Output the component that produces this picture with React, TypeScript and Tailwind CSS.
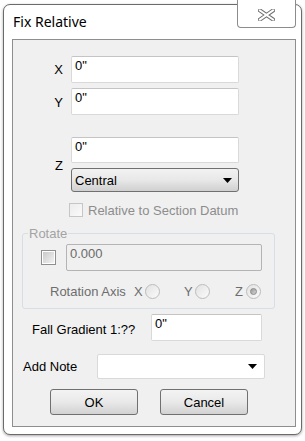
type TextBoxProps = {
  value?: string;
  className?: string;
};

function TextBox({ value, className = '' }: TextBoxProps) {
  return (
    <div className={`rounded-[2px] border border-[#d9d9d9] border-t-[#c4c4c4] bg-white px-[3px] pt-[1px] leading-[15px] text-black ${className}`}>
      {value}
    </div>
  );
}

function Arrow() {
  return (
    <svg width="9" height="5" viewBox="0 0 9 5" className="shrink-0">
      <path d="M0 0 H9 L4.5 5 Z" fill="#000" />
    </svg>
  );
}

function Radio({ checked = false }: { checked?: boolean }) {
  return (
    <span className="flex h-[15px] w-[15px] items-center justify-center rounded-full border border-[#bcbcbc] bg-gradient-to-br from-[#e2e2e2] to-[#fbfbfb]">
      {checked && <span className="h-[7px] w-[7px] rounded-full border border-[#8a8a8a] bg-gradient-to-br from-[#9a9a9a] to-[#d6d6d6]" />}
    </span>
  );
}

function Button({ label }: { label: string }) {
  return (
    <div className="flex h-[26px] w-[88px] items-center justify-center rounded-[3px] border border-[#707070] bg-gradient-to-b from-[#f3f3f3] via-[#e9e9e9] to-[#d2d2d2] leading-[15px] text-black">
      {label}
    </div>
  );
}

export default function App() {
  return (
    <div className="h-[441px] w-[305px] bg-white pl-[3px] pt-[4px] font-['Liberation_Sans',Arial,sans-serif] text-[13px]">
      <div className="relative h-[431px] w-[299px] rounded-[7px] border border-[#6b6b6b] bg-white px-[8px] shadow-[0_1px_3px_rgba(0,0,0,0.35)]">
        {/* title bar */}
        <div className="h-[34px] pl-[1px] pt-[7px] font-['Noto_Sans',sans-serif] text-[14px] leading-[19px] text-black">
          Fix Relative
        </div>
        <div className="absolute left-[233px] top-[-5px] flex h-[28px] w-[59px] items-center justify-center rounded-b-[4px] border border-t-0 border-[#8c8c8c] bg-white pt-[2px]">
          <svg width="17" height="12" viewBox="0 0 17 12">
            <path d="M2 1.5 L15 10.5 M15 1.5 L2 10.5" stroke="#6f6f6f" strokeWidth="4" strokeLinecap="square" />
            <path d="M2 1.5 L15 10.5 M15 1.5 L2 10.5" stroke="#fff" strokeWidth="2" strokeLinecap="square" />
          </svg>
        </div>

        {/* client panel */}
        <div className="h-[388px] w-[284px] border border-[#8e8e8e] bg-[#f0f0f0] text-black">
          <div className="mt-[16px] flex items-center">
            <span className="w-[58px] pr-[8px] pt-[1px] text-right">X</span>
            <TextBox value={'0"'} className="h-[27px] w-[168px]" />
          </div>
          <div className="mt-[5px] flex items-center">
            <span className="w-[58px] pr-[8px] pt-[3px] text-right">Y</span>
            <TextBox value={'0"'} className="h-[27px] w-[168px]" />
          </div>
          <div className="mt-[22px] flex items-center">
            <span className="w-[58px] pr-[8px] pt-[3px] text-right">Z</span>
            <div className="flex flex-col gap-[5px]">
              <TextBox value={'0"'} className="h-[26px] w-[168px]" />
              <div className="flex h-[24px] w-[168px] items-center justify-between rounded-[3px] border border-[#707070] bg-gradient-to-b from-[#f2f2f2] via-[#e8e8e8] to-[#d0d0d0] pl-[3px] pr-[6px] leading-[15px]">
                <span>Central</span>
                <Arrow />
              </div>
            </div>
          </div>

          <div className="mt-[11px] flex h-[14px] items-center pl-[56px]">
            <span className="h-[14px] w-[14px] border border-[#c6c6c6] bg-gradient-to-br from-[#ececec] to-[#fafafa]" />
            <span className="ml-[5px] leading-[15px] text-[#8d8d8d]">Relative to Section Datum</span>
          </div>

          {/* rotate group */}
          <div className="relative ml-[9px] mt-[16px] h-[76px] w-[253px] rounded-[3px] border border-[#d5dfe5]">
            <span className="absolute left-[5px] top-[-8px] bg-[#f0f0f0] px-[1px] leading-[15px] text-[#a3a3a3]">Rotate</span>
            <div className="mt-[10px] flex items-center">
              <span className="ml-[18px] flex h-[15px] w-[15px] items-center justify-center border border-[#8f8f8f] bg-white">
                <span className="h-[11px] w-[11px] bg-gradient-to-br from-[#c9c9c9] to-[#f3f3f3]" />
              </span>
              <div className="ml-[10px] h-[27px] w-[196px] rounded-[2px] border border-[#b4b4b4] px-[3px] pt-[1px] leading-[15px] text-[#6a6a6a]">
                0.000
              </div>
            </div>
            <div className="mt-[13px] flex items-center leading-[15px] text-[#6d6d6d]">
              <span className="ml-[27px] w-[84px]">Rotation Axis</span>
              <span className="flex items-center gap-[2px]">
                <span className="w-[9px]">X</span>
                <Radio />
              </span>
              <span className="ml-[24px] flex items-center gap-[2px]">
                <span className="w-[9px]">Y</span>
                <Radio />
              </span>
              <span className="ml-[25px] flex items-center gap-[2px]">
                <span className="w-[9px]">Z</span>
                <Radio checked />
              </span>
            </div>
          </div>

          <div className="mt-[5px] flex items-center">
            <span className="ml-[19px] w-[119px] pt-[3px] leading-[15px]">Fall Gradient 1:??</span>
            <TextBox value={'0"'} className="h-[27px] w-[111px]" />
          </div>

          <div className="mt-[13px] flex items-center">
            <span className="ml-[10px] w-[74px] leading-[15px]">Add Note</span>
            <div className="flex h-[25px] w-[168px] items-center justify-end rounded-[2px] border border-[#d9d9d9] bg-white pr-[7px]">
              <Arrow />
            </div>
          </div>

          <div className="mt-[10px] flex items-center pl-[37px]">
            <Button label="OK" />
            <span className="ml-[22px]">
              <Button label="Cancel" />
            </span>
          </div>
        </div>
      </div>
    </div>
  );
}
